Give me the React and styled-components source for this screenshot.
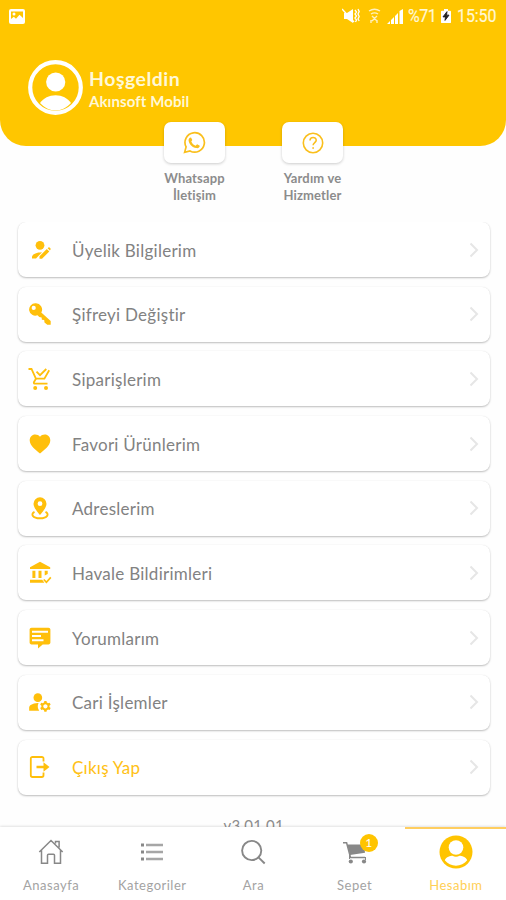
import React from 'react';
import styled, { createGlobalStyle } from 'styled-components';
import { MdManageAccounts } from 'react-icons/md';

const GlobalStyle = createGlobalStyle`
  * {
    box-sizing: border-box;
  }
  body {
    margin: 0;
    background: #fefefe;
    font-family: Lato, "Noto Sans", sans-serif;
  }
  svg {
    display: block;
    flex: none;
  }
`;

const Screen = styled.div`
  width: 506px;
  height: 900px;
  overflow: hidden;
  display: flex;
  flex-direction: column;
  background: #fefefe;
`;

const Header = styled.header`
  flex: none;
  height: 146px;
  background: #ffc600;
  border-radius: 0 0 26px 26px;
  color: #fff8d6;
`;

const StatusBar = styled.div`
  height: 32px;
  padding: 0 9px;
  display: flex;
  align-items: center;
  justify-content: space-between;
`;

const StatusRight = styled.div`
  display: flex;
  align-items: center;
  font-family: Roboto, sans-serif;
  font-size: 16px;
  line-height: 32px;
`;

const StatusIcon = styled.svg`
  margin-right: ${(props) => props.$gap || 0}px;
`;

const StatusText = styled.span`
  width: ${(props) => props.$width}px;
  white-space: nowrap;
  letter-spacing: ${(props) => props.$spacing || 0}px;
  transform: scaleY(1.15);
  -webkit-text-stroke: 0.2px currentColor;
`;

const Profile = styled.div`
  display: flex;
  padding: 28px 0 0 28px;
  gap: 6px;
`;

const Hello = styled.div`
  padding-top: 7px;
  font-size: 19.5px;
  line-height: 24px;
  font-weight: 700;
  letter-spacing: 0.5px;
`;

const UserName = styled.div`
  font-size: 15px;
  line-height: 21px;
  font-weight: 700;
  letter-spacing: 0.1px;
`;

const Shortcuts = styled.div`
  flex: none;
  height: 100px;
  margin-top: -24px;
  display: flex;
  justify-content: center;
  gap: 38px;
  padding-left: 1px;
`;

const Shortcut = styled.div`
  width: 80px;
  display: flex;
  flex-direction: column;
  align-items: center;
  font-size: 13px;
  line-height: 17px;
  font-weight: 700;
  letter-spacing: 0.15px;
  text-align: center;
  color: #8c8c8c;
`;

const ShortcutButton = styled.button`
  width: 61px;
  height: 41px;
  margin-bottom: 7px;
  padding: 0;
  border: 0;
  border-radius: 7px;
  background: #fff;
  color: #fabf1c;
  display: flex;
  align-items: center;
  justify-content: center;
  box-shadow: 0 1px 3px rgba(0, 0, 0, 0.2);
`;

const Menu = styled.div`
  flex: 1;
  min-height: 0;
  overflow: hidden;
  padding: 0 16px 0 17.5px;
  display: flex;
  flex-direction: column;
  gap: 9.7px;
`;

const MenuRow = styled.div`
  flex: none;
  height: 55px;
  display: flex;
  align-items: center;
  padding: 0 10px 0 10.5px;
  border-radius: 8px;
  background: #fff;
  box-shadow: 0 1px 2px rgba(0, 0, 0, 0.25), 0 0 1px rgba(0, 0, 0, 0.08);
  color: #ffbf0b;
`;

const MenuLabel = styled.span`
  flex: 1;
  margin-left: 20px;
  padding-top: 2px;
  font-size: 17px;
  line-height: 24px;
  letter-spacing: 0.26px;
  color: ${(props) => (props.$active ? '#ffc116' : '#828282')};
`;

const IconSlot = styled.div`
  width: 24px;
  height: 24px;
  display: flex;
  align-items: center;
  justify-content: center;
`;

const Version = styled.div`
  padding-top: 11px;
  text-align: center;
  font-size: 15px;
  line-height: 20px;
  letter-spacing: 0.3px;
  color: #8d8d8d;
`;

const NavBar = styled.nav`
  flex: none;
  height: 73px;
  display: grid;
  grid-template-columns: repeat(5, 1fr);
  background: #fff;
  box-shadow: 0 -1px 2px rgba(0, 0, 0, 0.11);
`;

const NavItem = styled.div`
  display: flex;
  flex-direction: column;
  align-items: center;
  padding-left: 1px;
  border-top: 2px solid ${(props) => (props.$active ? '#ffce60' : 'transparent')};
  color: ${(props) => (props.$active ? '#ffc400' : '#888')};
`;

const NavIcon = styled.div`
  position: relative;
  height: 46px;
  display: flex;
  align-items: center;
`;

const NavLabel = styled.div`
  font-size: 13px;
  line-height: 21px;
  letter-spacing: 0.5px;
  color: ${(props) => (props.$active ? '#ffcf55' : '#a3a3a3')};
`;

const Badge = styled.span`
  position: absolute;
  top: 5px;
  left: 18px;
  width: 18px;
  height: 18px;
  border-radius: 50%;
  background: #ffc400;
  color: #fff;
  font-size: 12px;
  line-height: 18px;
  text-align: center;
`;

const Avatar = () => (
  <svg width="55" height="55" viewBox="0 0 55 55" fill="#fff">
    <circle cx="27.5" cy="27.5" r="25.3" fill="none" stroke="#fff" strokeWidth="4.2" />
    <circle cx="27.7" cy="22" r="9.6" />
    <path d="M12 43c3.5-5 9-7.800 15.600-7.800S39.500 38 43 43c-4 4.500-9.500 7.500-15.500 7.500S16 47.500 12 43z" />
  </svg>
);

const WhatsappIcon = () => (
  <svg width="23" height="23" viewBox="0 0 23 23" fill="none" stroke="currentColor" strokeWidth="1.7">
    <path d="M1.600 21.400l1.500-5.500A9.700 9.700 0 1 1 7 19.900z" />
    <path d="M8 6.400l1.300 2.700-1 1.500c1 2.300 2.300 3.400 4.300 4.200l1.500-1.500 2.700 1.500c-.2 2-1.700 2.700-3.600 2.300-3.900-.8-7-3.900-7.600-7.400-.2-1.600.8-3.300 2.400-3.300z" fill="currentColor" stroke="none" />
  </svg>
);

const HelpIcon = () => (
  <svg width="22" height="22" viewBox="0 0 22 22" fill="none" stroke="currentColor" strokeWidth="1.6">
    <circle cx="11" cy="11" r="9.700" />
    <path d="M8 8.500c0-4 6.200-3.800 6.200-.3 0 2.300-3.100 2.500-3.100 5.100" />
    <circle cx="11.100" cy="16" r=".5" fill="currentColor" strokeWidth="1" />
  </svg>
);

const UserEditIcon = () => (
  <svg width="24" height="24" viewBox="0 0 24 24" fill="currentColor">
    <circle cx="12" cy="7.300" r="4.400" />
    <path d="M4 20.600v-1.500c0-2.700 3.800-4.700 10-4.900l-6 6.400z" />
    <path d="M11.500 20.800v-2.500l7.300-7.200 2.500 2.400-7.300 7.300zM19.600 10.300l.9-.8c.3-.3.700-.2 1 .1l1 1c.3.300.3.700 0 1l-.6.900z" />
  </svg>
);

const KeyIcon = () => (
  <svg width="24" height="24" viewBox="0 0 24 24" fill="currentColor">
    <path fillRule="evenodd" d="M7.500 1.300a6.200 6.200 0 1 0 2 12l1.800 1.800 2.300.3.300 2.400 2.300.2.300 2.500 2.800 2.200h3.400v-3.600l-9.400-8.600A6.200 6.200 0 0 0 7.500 1.300zM5.700 3.800a2.100 2.100 0 1 1 0 4.200 2.100 2.100 0 0 1 0-4.200z" />
  </svg>
);

const OrderIcon = () => (
  <svg width="24" height="24" viewBox="0 0 24 24" fill="none" stroke="currentColor" strokeWidth="1.800">
    <path d="M.5 2h3l4.400 9.700h8.500l4.800-8.500" />
    <path d="M7.900 11.700L6 15c-.5.900 0 1.700 1 1.700h12.500" />
    <path d="M8.500 4.700l3.500 3.500L18.300 2" />
    <circle cx="7.200" cy="21" r="2" fill="currentColor" stroke="none" />
    <circle cx="18" cy="21" r="2" fill="currentColor" stroke="none" />
  </svg>
);

const HeartIcon = () => (
  <svg width="24" height="24" viewBox="0 0 24 24" fill="currentColor">
    <path d="M12 21.500C8 18.300 1.700 13.700 1.700 8.300c0-3.400 2.300-5.900 5.500-5.900 2 0 3.700.8 4.800 2.300 1.100-1.500 2.800-2.300 4.800-2.300 3.200 0 5.500 2.500 5.500 5.900 0 5.400-6.300 10-10.300 13.200z" />
  </svg>
);

const AddressIcon = () => (
  <svg width="24" height="24" viewBox="0 0 24 24" fill="currentColor">
    <path fillRule="evenodd" d="M12 1.300a6.500 6.500 0 0 0-6.500 6.500c0 4.500 6.500 11.200 6.500 11.200s6.500-6.700 6.500-11.200A6.500 6.500 0 0 0 12 1.300zm0 4a2.400 2.400 0 1 1 0 4.800 2.400 2.400 0 0 1 0-4.800z" />
    <path d="M6.500 15.800c-4.200 2.200-2 6.500 5.500 6.500s9.700-4.300 5.500-6.500" fill="none" stroke="currentColor" strokeWidth="1.900" />
  </svg>
);

const BankIcon = () => (
  <svg width="24" height="24" viewBox="0 0 24 24" fill="currentColor">
    <path d="M12 .7l10.200 5.500v1.700H2V6.200zM4.400 9.700h3v7.400h-3zM10.500 9.700h3v7.400h-3zM16.700 9.700h3v3.400l-3 1.400zM2 18.800h12.200l2.200 3H2z" />
    <path d="M15.700 18.500l2.700 2.700 4.400-4.800" fill="none" stroke="currentColor" strokeWidth="1.700" />
  </svg>
);

const CommentIcon = () => (
  <svg width="24" height="24" viewBox="0 0 24 24" fill="currentColor">
    <path fillRule="evenodd" d="M3.500 1.700h17c1.100 0 1.900.8 1.900 1.900v13c0 1.100-.8 1.900-1.900 1.900h-5.800l-4.700 4v-4H3.500c-1.100 0-1.900-.8-1.900-1.900v-13c0-1.100.8-1.900 1.900-1.900zM4 4.800v2h16v-2zm0 4.200v2h9V9zm0 4.200v2h11.500v-2z" />
  </svg>
);

const LogoutIcon = () => (
  <svg width="24" height="24" viewBox="0 0 24 24" fill="none" stroke="currentColor">
    <path d="M15.500 6.500V3.700c0-1-.6-1.700-1.700-1.700H4.500c-1 0-1.700.7-1.700 1.700v16.600c0 1 .7 1.700 1.700 1.700h9.300c1.100 0 1.700-.7 1.700-1.700v-2.800" strokeWidth="1.800" />
    <path d="M8.500 12H17" strokeWidth="2.500" />
    <path d="M15.500 7.200l6 4.800-6 4.800z" fill="currentColor" stroke="none" />
  </svg>
);

const Chevron = () => (
  <svg width="12" height="18" viewBox="0 0 12 18" fill="none" stroke="#e6e6e6" strokeWidth="2">
    <path d="M2.500 2.500L9 9l-6.500 6.500" />
  </svg>
);

const HomeIcon = () => (
  <svg width="28" height="28" viewBox="0 0 28 28" fill="none" stroke="currentColor" strokeWidth="1.500">
    <path d="M2.300 14L14 2.500 25.700 14M4.500 12.300v13h6v-8c0-.7.400-1.100 1-1.100h5c.6 0 1 .4 1 1.100v8h6v-13M18.500 5.500V3.500h3.600v6" />
  </svg>
);

const ListIcon = () => (
  <svg width="24" height="24" viewBox="0 0 24 24" fill="none" stroke="currentColor">
    <path d="M1 5h3M1 12h3M1 19h3" strokeWidth="3" />
    <path d="M6 5h17M6 12h17M6 19h17" strokeWidth="2.600" opacity=".75" />
  </svg>
);

const SearchIcon = () => (
  <svg width="26" height="26" viewBox="0 0 26 26" fill="none" stroke="currentColor" strokeWidth="1.900">
    <circle cx="11.700" cy="11.500" r="9.600" />
    <path d="M18.500 18.300l6.200 6.200" />
  </svg>
);

const CartIcon = () => (
  <svg width="26" height="24" viewBox="0 0 26 24" fill="currentColor">
    <path d="M1 2.700h3.600L8.500 17.500h14.500" fill="none" stroke="currentColor" strokeWidth="1.500" />
    <path d="M5.300 4.500H22l1 8.300-15 2.100z" />
    <path d="M7.500 14v5M23.500 17v3" stroke="currentColor" strokeWidth="1" />
    <circle cx="8.800" cy="21.500" r="2.100" />
    <circle cx="22" cy="21.500" r="2.100" />
  </svg>
);

const AccountIcon = () => (
  <svg width="34" height="34" viewBox="0 0 34 34">
    <circle cx="17" cy="17" r="16.500" fill="#ffc400" />
    <circle cx="17" cy="12.500" r="7.300" fill="#fff" />
    <path d="M5.800 25.300c1.300-3.400 5.700-4.500 7.700-4.500 2.100 1.200 4.900 1.200 7 0 2 0 6.400 1.100 7.700 4.500-5.200 7.200-17.200 7.200-22.400 0z" fill="#fff" />
  </svg>
);

const menuItems = [
  { label: 'Üyelik Bilgilerim', icon: <UserEditIcon /> },
  { label: 'Şifreyi Değiştir', icon: <KeyIcon /> },
  { label: 'Siparişlerim', icon: <OrderIcon /> },
  { label: 'Favori Ürünlerim', icon: <HeartIcon /> },
  { label: 'Adreslerim', icon: <AddressIcon /> },
  { label: 'Havale Bildirimleri', icon: <BankIcon /> },
  { label: 'Yorumlarım', icon: <CommentIcon /> },
  { label: 'Cari İşlemler', icon: <MdManageAccounts size={26} /> },
  { label: 'Çıkış Yap', icon: <LogoutIcon />, active: true },
];

const navItems = [
  { label: 'Anasayfa', icon: <HomeIcon /> },
  { label: 'Kategoriler', icon: <ListIcon /> },
  { label: 'Ara', icon: <SearchIcon /> },
  { label: 'Sepet', icon: <CartIcon />, badge: 1 },
  { label: 'Hesabım', icon: <AccountIcon />, active: true },
];

const App = () => {
  return (
    <Screen>
      <GlobalStyle />
      <Header>
        <StatusBar>
          <svg width="16" height="15" viewBox="0 0 16 15">
            <rect width="16" height="15" rx="2" fill="#fff" />
            <path d="M2 2.500h12v6.500l-3.500-3.300L7 9.800 4.800 7.700 2 10z" fill="#ffc600" />
            <circle cx="5" cy="5" r="1.500" fill="#fff" />
          </svg>
          <StatusRight>
            <StatusIcon width="18" height="16" viewBox="0 0 18 16" fill="#fff" $gap={8}>
              <path d="M2 5h3l6-4v14l-6-4H2z" />
              <path d="M0 1l12 13" stroke="#fff" strokeWidth="1.400" />
              <path d="M13 2l1.500 2L13 6l1.500 2L13 10l1.500 2-1 2M16 1l1.200 2.500L16 6l1.200 2.500L16 11l1.200 2" fill="none" stroke="#fff" strokeWidth="1.300" />
            </StatusIcon>
            <StatusIcon width="13" height="16" viewBox="0 0 13 16" fill="none" stroke="#fff" opacity=".75" $gap={6}>
              <path d="M1 3c3.500-2.300 7.500-2.300 11 0M3 6c2.300-1.500 4.700-1.500 7 0M4 8l5 5M9 8l-5 5M3 12v3M9 12v3" strokeWidth="1.400" />
            </StatusIcon>
            <StatusIcon width="16" height="15" viewBox="0 0 16 15" fill="#fff" $gap={5}>
              <path d="M0 15l3-3v3zM4 11l3-3v7H4zM8 7l3-3v11H8zM12.500 2L16 0v15h-3.500z" />
            </StatusIcon>
            <StatusText $width={33} $spacing={-0.5}>%71</StatusText>
            <StatusIcon width="10" height="14" viewBox="0 0 10 16" preserveAspectRatio="none" $gap={6}>
              <path d="M1 2h2V0h4v2h2c.6 0 1 .4 1 1v12c0 .6-.4 1-1 1H1c-.6 0-1-.4-1-1V3c0-.6.400-1 1-1z" fill="#fff" />
              <path d="M6 3L2 9h2.500L4 13l4-6H5.500z" fill="#222" stroke="#222" />
            </StatusIcon>
            <StatusText $width={40} $spacing={-0.1}>15:50</StatusText>
          </StatusRight>
        </StatusBar>
        <Profile>
          <Avatar />
          <div>
            <Hello>Hoşgeldin</Hello>
            <UserName>Akınsoft Mobil</UserName>
          </div>
        </Profile>
      </Header>
      <Shortcuts>
        <Shortcut>
          <ShortcutButton><WhatsappIcon /></ShortcutButton>
          Whatsapp<br />İletişim
        </Shortcut>
        <Shortcut>
          <ShortcutButton><HelpIcon /></ShortcutButton>
          Yardım ve<br />Hizmetler
        </Shortcut>
      </Shortcuts>
      <Menu>
        {menuItems.map((item) => (
          <MenuRow key={item.label}>
            <IconSlot>{item.icon}</IconSlot>
            <MenuLabel $active={item.active}>{item.label}</MenuLabel>
            <Chevron />
          </MenuRow>
        ))}
        <Version>v3.01.01</Version>
      </Menu>
      <NavBar>
        {navItems.map((item) => (
          <NavItem key={item.label} $active={item.active}>
            <NavIcon>
              {item.icon}
              {item.badge && <Badge>{item.badge}</Badge>}
            </NavIcon>
            <NavLabel $active={item.active}>{item.label}</NavLabel>
          </NavItem>
        ))}
      </NavBar>
    </Screen>
  );
};

export default App;
